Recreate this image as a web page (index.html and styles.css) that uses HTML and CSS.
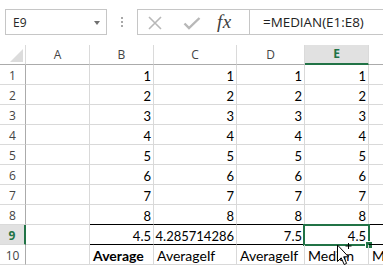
FILE: index.html
```html
<!DOCTYPE html>
<html>
<head>
<meta charset="utf-8">
<link rel="stylesheet" href="styles.css">
</head>
<body>
<div class="toolbar">
  <div class="namebox"><span>E9</span><span class="caret"></span></div>
  <div class="grip"><i></i><i></i><i></i></div>
  <div class="fbar">
    <div class="fbtns">
      <svg class="ic-x" width="16" height="14" viewBox="0 0 16 14"><path d="M2 1 L14 13 M14 1 L2 13" stroke="#b8b8b8" stroke-width="1.6" fill="none"/></svg>
      <svg class="ic-ok" width="18" height="13" viewBox="0 0 18 13"><path d="M1.5 6.5 L6 11 L16.5 1" stroke="#b8b8b8" stroke-width="2.4" fill="none"/></svg>
      <span class="fx">fx</span>
    </div>
    <div class="finput">=MEDIAN(E1:E8)</div>
  </div>
</div>
<div class="sheet">
  <div class="ch corner"><span class="tri"></span></div>
  <div class="ch">A</div><div class="ch">B</div><div class="ch">C</div><div class="ch">D</div><div class="ch hl">E</div><div class="ch"></div>

  <div class="rh">1</div><div class="c"></div><div class="c n">1</div><div class="c n">1</div><div class="c n">1</div><div class="c n">1</div><div class="c"></div>
  <div class="rh">2</div><div class="c"></div><div class="c n">2</div><div class="c n">2</div><div class="c n">2</div><div class="c n">2</div><div class="c"></div>
  <div class="rh">3</div><div class="c"></div><div class="c n">3</div><div class="c n">3</div><div class="c n">3</div><div class="c n">3</div><div class="c"></div>
  <div class="rh">4</div><div class="c"></div><div class="c n">4</div><div class="c n">4</div><div class="c n">4</div><div class="c n">4</div><div class="c"></div>
  <div class="rh">5</div><div class="c"></div><div class="c n">5</div><div class="c n">5</div><div class="c n">5</div><div class="c n">5</div><div class="c"></div>
  <div class="rh">6</div><div class="c"></div><div class="c n">6</div><div class="c n">6</div><div class="c n">6</div><div class="c n">6</div><div class="c"></div>
  <div class="rh">7</div><div class="c"></div><div class="c n">7</div><div class="c n">7</div><div class="c n">7</div><div class="c n">7</div><div class="c"></div>
  <div class="rh">8</div><div class="c"></div><div class="c n bb">8</div><div class="c n bb">8</div><div class="c n bb">8</div><div class="c n bb">8</div><div class="c bb"></div>

  <div class="rh hl">9</div><div class="c"></div><div class="c n bb">4.5</div><div class="c n bb">4.285714286</div><div class="c n bb">7.5</div><div class="c n bb active">4.5<span class="selbox"><span class="handle"></span></span></div><div class="c bb"></div>

  <div class="rh">10</div><div class="c"></div><div class="c t b">Average</div><div class="c t">AverageIf</div><div class="c t">AverageIf</div><div class="c t">Median</div><div class="c t">M</div>
</div>
<svg class="cursor" width="16" height="24" viewBox="0 0 16 24"><path d="M1.5 3 V19.5 L5.2 15.8 L8.2 22.5 L10.6 21.4 L7.7 14.8 H12.5 Z" fill="#fff" stroke="#000" stroke-width="1" stroke-linejoin="miter"/><path d="M12.5 1 v6 M9.5 4 h6" stroke="#000" stroke-width="1"/></svg>
</body>
</html>
```
FILE: styles.css
```css
* { box-sizing: border-box; }
html, body { margin: 0; padding: 0; }
body {
  width: 383px;
  height: 266px;
  overflow: hidden;
  position: relative;
  background: #fff;
  font-family: "Open Sans", sans-serif;
}
.toolbar {
  display: flex;
  align-items: flex-start;
  height: 45px;
  padding: 9px 0 0 5px;
}
.namebox {
  width: 102px;
  height: 26px;
  border: 1px solid #c6c6c6;
  display: flex;
  align-items: center;
  justify-content: space-between;
  padding: 1px 6px 0 7px;
  font-size: 12px;
  color: #262626;
}
.caret {
  width: 0;
  height: 0;
  border-left: 3.5px solid transparent;
  border-right: 3.5px solid transparent;
  border-top: 4px solid #707070;
}
.grip {
  margin-left: 14px;
  margin-top: 8px;
  display: flex;
  flex-direction: column;
  gap: 2px;
}
.grip i {
  display: block;
  width: 2px;
  height: 2px;
  background: #a8a8a8;
}
.fbar {
  margin-left: 14px;
  flex: 1;
  height: 26px;
  border: 1px solid #c6c6c6;
  border-right: none;
  display: flex;
}
.fbtns {
  width: 112px;
  border-right: 1px solid #c6c6c6;
  display: flex;
  align-items: center;
  padding-left: 9px;
}
.ic-x { margin-top: 1px; }
.ic-ok { margin-left: 20px; margin-top: 2px; }
.fx {
  margin-left: 16px;
  font-family: "Liberation Serif", serif;
  font-style: italic;
  font-size: 19px;
  color: #404040;
  line-height: 20px;
  letter-spacing: 0.5px;
}
.finput {
  padding: 1px 0 0 13px;
  font-size: 13.4px;
  line-height: 23px;
  color: #222;
  white-space: nowrap;
}
.sheet {
  display: grid;
  grid-template-columns: 26px 64px 64px 83px 68px 64px 1fr;
  grid-template-rows: repeat(11, 20px);
}
.ch {
  border-right: 1px solid #dadada;
  border-bottom: 1px solid #ababab;
  font-size: 12px;
  line-height: 19px;
  color: #444;
  text-align: center;
}
.corner { position: relative; }
.tri {
  position: absolute;
  right: 2px;
  bottom: 2px;
  width: 0;
  height: 0;
  border-left: 13px solid transparent;
  border-bottom: 13px solid #dcdcdc;
}
.ch.hl {
  background: #e1e1e1;
  color: #217346;
  font-weight: bold;
  border-bottom: 2px solid #217346;
  line-height: 18px;
}
.rh {
  border-right: 1px solid #ababab;
  border-bottom: 1px solid #dadada;
  font-size: 12px;
  line-height: 19px;
  padding-top: 1px;
  color: #444;
  text-align: center;
}
.rh.hl {
  background: #e1e1e1;
  color: #217346;
  font-weight: bold;
  border-right: 2px solid #217346;
}
.c {
  border-right: 1px solid #d9d9d9;
  border-bottom: 1px solid #d9d9d9;
  font-family: "Lato", sans-serif;
  font-size: 13px;
  line-height: 16px;
  color: #000;
  display: flex;
  align-items: flex-end;
  padding: 0 2px 0 3px;
  white-space: nowrap;
  position: relative;
}
.n { justify-content: flex-end; }
.t { font-size: 14px; }
.b { font-weight: bold; }
.bb { border-bottom-color: #000; }
.selbox {
  position: absolute;
  left: -2px;
  top: -1px;
  right: -2px;
  bottom: -2px;
  border: 2px solid #217346;
}
.handle {
  position: absolute;
  right: -4px;
  bottom: -4px;
  width: 6px;
  height: 6px;
  background: #217346;
  box-shadow: 0 0 0 1px #fff;
}
.cursor {
  position: absolute;
  left: 336px;
  top: 242px;
}
```
